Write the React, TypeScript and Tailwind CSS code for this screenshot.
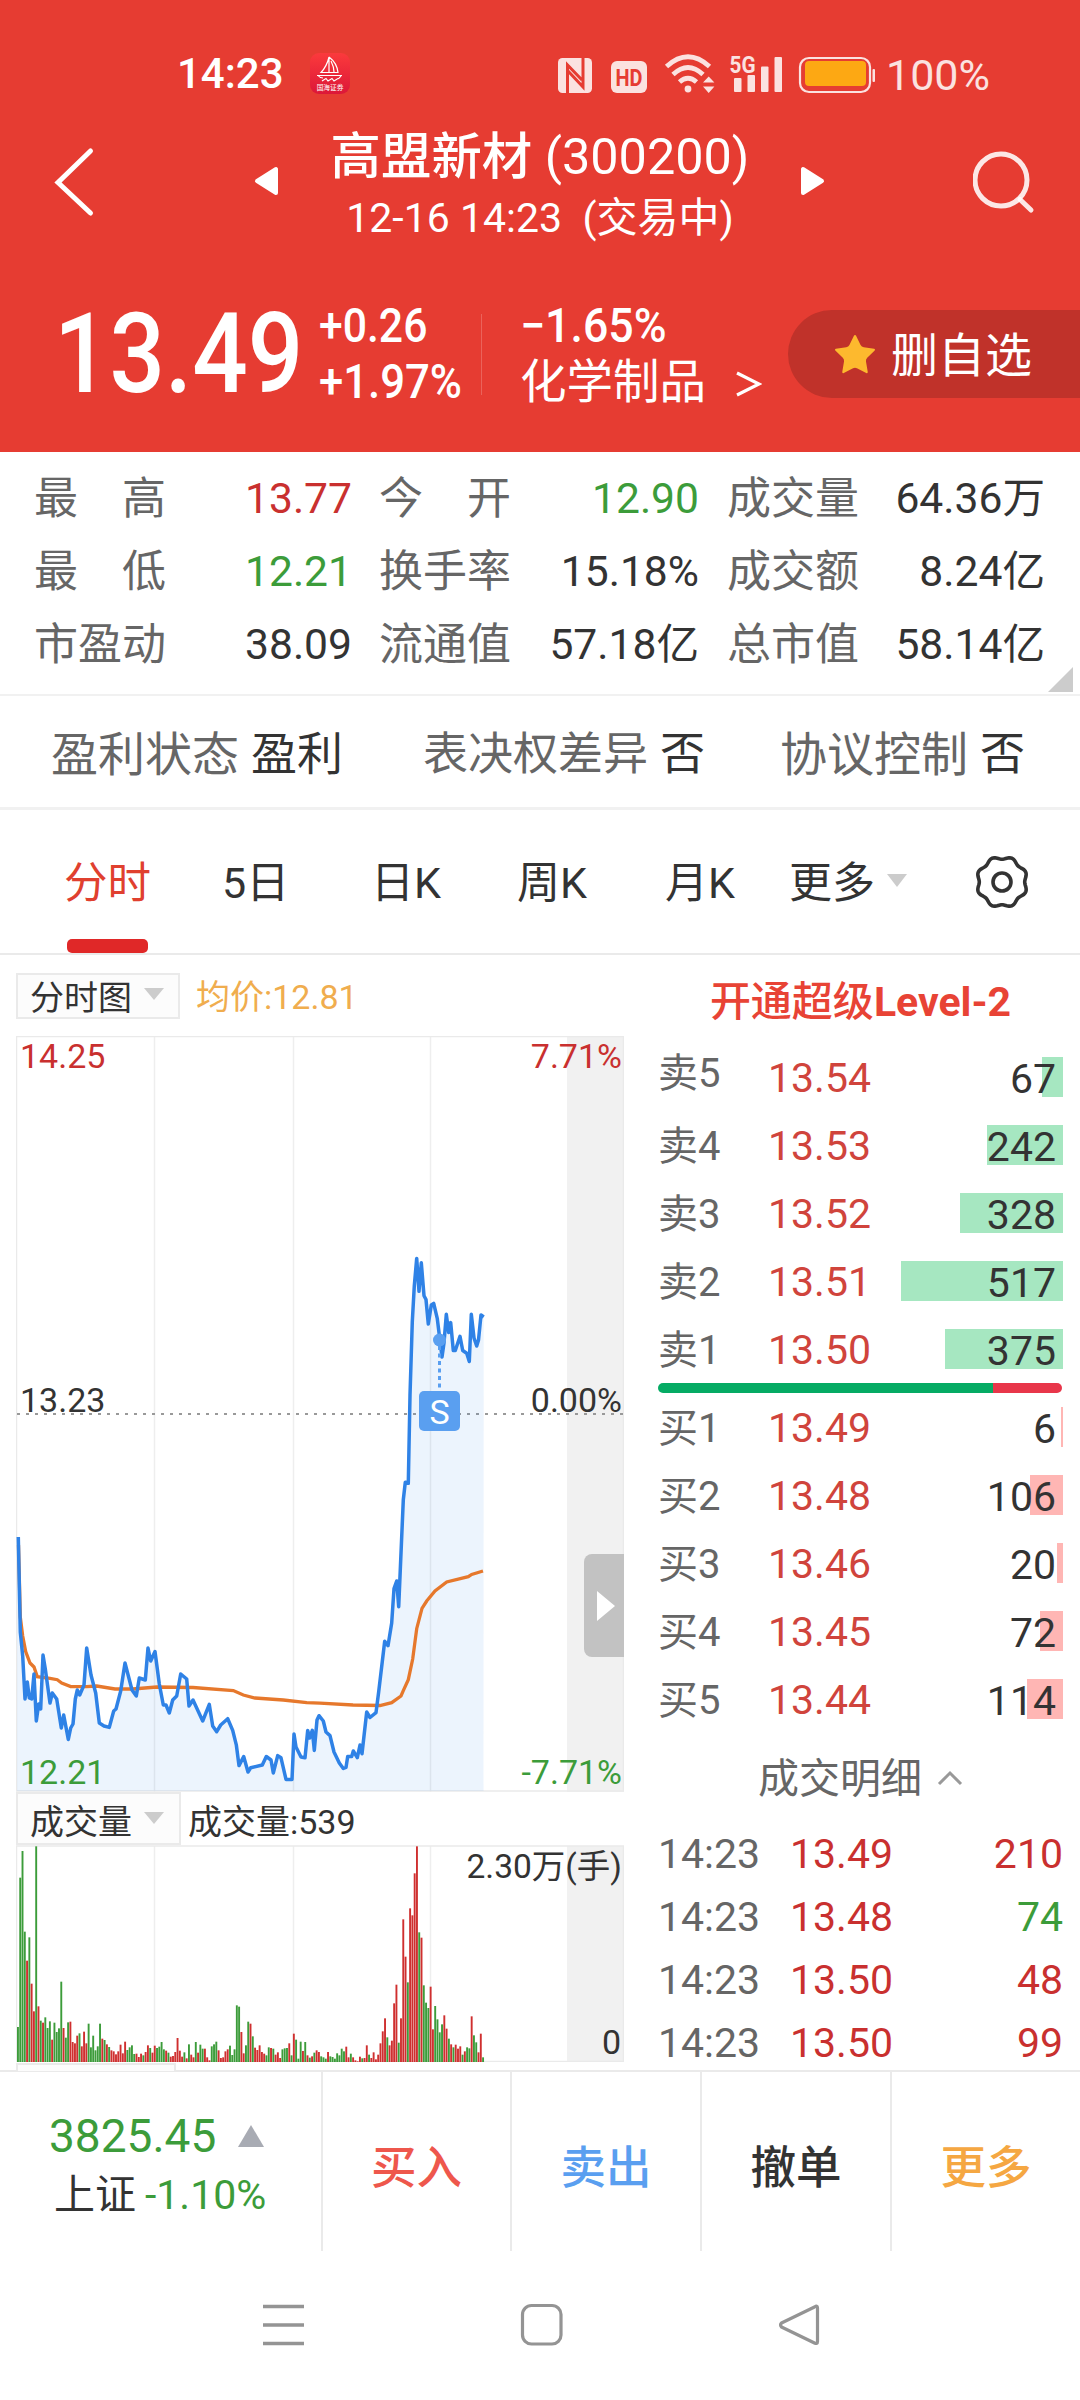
import { Star } from "lucide-react"
import clsx from "clsx"

const stats = [
  [
    { label: "最 高", value: "13.77", color: "text-[#c9302f]" },
    { label: "今 开", value: "12.90", color: "text-[#3c9c3a]" },
    { label: "成交量", value: "64.36万", color: "text-[#333]" },
  ],
  [
    { label: "最 低", value: "12.21", color: "text-[#3c9c3a]" },
    { label: "换手率", value: "15.18%", color: "text-[#333]" },
    { label: "成交额", value: "8.24亿", color: "text-[#333]" },
  ],
  [
    { label: "市盈动", value: "38.09", color: "text-[#333]" },
    { label: "流通值", value: "57.18亿", color: "text-[#333]" },
    { label: "总市值", value: "58.14亿", color: "text-[#333]" },
  ],
]

const sells = [
  { label: "卖5", price: "13.54", qty: 67, bar: 21 },
  { label: "卖4", price: "13.53", qty: 242, bar: 76 },
  { label: "卖3", price: "13.52", qty: 328, bar: 103 },
  { label: "卖2", price: "13.51", qty: 517, bar: 162 },
  { label: "卖1", price: "13.50", qty: 375, bar: 118 },
]

const buys = [
  { label: "买1", price: "13.49", qty: 6, bar: 2 },
  { label: "买2", price: "13.48", qty: 106, bar: 33 },
  { label: "买3", price: "13.46", qty: 20, bar: 6 },
  { label: "买4", price: "13.45", qty: 72, bar: 23 },
  { label: "买5", price: "13.44", qty: 114, bar: 36 },
]

const trades = [
  { time: "14:23", price: "13.49", qty: 210, up: true },
  { time: "14:23", price: "13.48", qty: 74, up: false },
  { time: "14:23", price: "13.50", qty: 48, up: true },
  { time: "14:23", price: "13.50", qty: 99, up: true },
]

// minute line and running average, in chart units
const priceLine =
  "18.3,1537 20.3,1632 22.7,1656 25,1699 27.3,1682 29.3,1698 31.7,1699 34,1674 36.3,1721 38.7,1704 40.7,1709 43,1655 45.3,1669 50,1703 52.3,1693 56.7,1699 61.3,1728 63.7,1715 68.3,1739.5 70.7,1728 73,1724 75.3,1699 77.3,1690 79.7,1695 84,1685 86.7,1648 91,1675 95.7,1693 99.3,1723 104,1726 109.3,1727.4 113.7,1711 116,1709 120.7,1691 125,1663 132,1690 136.3,1696 139.3,1678 145.3,1680 148,1648 150.7,1661 155,1651.5 159.3,1684 163.3,1705 166,1705 169.3,1713 172.7,1700 176.7,1696 180.7,1674 186.7,1679 189,1706 193,1700 202.7,1721 209.3,1704.4 212.7,1726 216.7,1731.7 220.7,1725 227.7,1718.7 232.7,1730.4 236.3,1744.8 239,1765.6 243.7,1756.5 248,1772 250.7,1767.7 262.3,1765 266.3,1756.5 271,1760 273.3,1773 277.7,1755.6 281,1757.8 286,1779.4 292,1779.4 294,1734 296,1747 301,1757 305,1757.8 307.7,1730.4 309.7,1738 312.3,1730.4 314.3,1750.4 317,1720 319,1715.7 323.3,1721 326,1732 330,1735.6 334,1752 339.3,1763 343.3,1768.5 346,1767.4 347.7,1756.5 351.7,1756.5 353.3,1751 357.3,1757.6 360,1745 362,1753.7 366.7,1712 370,1717.5 376,1712.6 378.7,1691.7 384.7,1641.3 388,1645.7 391.7,1623 394,1588.6 396.7,1581 398.7,1606.7 403.3,1499.8 405.3,1482.2 408.3,1483.3 410,1395.5 412.3,1321.5 414.3,1285.8 416.7,1258.4 419,1291.3 421.3,1262.8 424,1295.7 426,1299.5 428.3,1324 431.3,1305 433.7,1303.4 437.3,1318.7 442,1357 444,1343 446.3,1314.3 448.7,1332.5 450.7,1322.6 453.3,1350.5 455.3,1350.5 460,1336.3 462.7,1350.5 466.7,1353.3 469.3,1361.5 471.3,1314.3 474,1338 476.7,1346 478.5,1340 481,1315 483.7,1317"

const averageLine =
  "18.5,1545 20.3,1617 22.7,1636 25.7,1651.5 30,1663 34,1667 37.3,1676.7 50,1678.4 57.3,1679.7 61.7,1683 70.7,1686.6 86.7,1686.6 96.7,1686 115,1689 133,1689 156.7,1687 193,1687.5 233.3,1690.5 243.3,1695 255,1698 283.3,1700 306.7,1702.7 320,1703.2 353,1705 380,1705.5 391.7,1702.7 401,1696 403.3,1690.6 408.3,1679.7 412.7,1659 416.7,1628.7 422,1608.4 426.7,1601 435,1591 446.7,1582 468.3,1576.6 471.7,1574.4 483,1571"

// g = down minute, r = up minute, the number is the bar's height
const volume =
  "g105 g553 g633 g391 r304 g374 r235 r152 g647 r167 g124 r118 g134 g102 g122 r67 g118 g90 g101 g241 r102 g73 g119 r121 r60 r56 r79 g86 r47 r91 r56 g115 g44 g79 g35 g47 g115 r70 g66 r53 g45 r35 r32 r23 r32 r52 r26 r61 g36 g44 g50 g24 r25 r15 r25 g20 r30 r50 g42 r28 r49 g42 g46 g60 g38 r34 g28 r16 r18 r30 r72 r34 r16 g29 r11 g53 r22 r14 g60 r28 g52 g40 r40 r14 r5 g47 g53 g61 r35 r12 r14 r32 r38 g49 g21 g38 g170 g166 r90 r26 g50 g121 r115 g77 r43 r36 r50 r30 r25 g20 g44 r42 g40 r22 r29 r12 g38 g41 g42 r56 g20 r85 g67 g10 g61 r33 g60 r20 g13 r17 g28 r35 r30 g17 g14 g10 r30 g17 g15 g10 g26 g20 g40 g32 r46 r14 g25 r14 r5 r2 r16 g11 r12 r50 g22 r12 r29 r8 r22 r56 r92 r131 g74 r50 r64 r176 r232 g58 r131 r428 r316 g239 r461 r440 r566 r647 g389 r373 g230 g178 g162 r226 r98 g168 g128 g89 g113 r140 r100 g70 r53 g44 r52 r40 r47 g22 r32 g44 g41 r137 g80 g59 r29 r85 g14"
    .split(" ")
    .map((s) => ({ up: s[0] === "r", h: Number(s.slice(1)) / 3 }))

function gearPath() {
  const pts: string[] = []
  for (let i = 0; i < 160; i++) {
    const a = (i / 160) * Math.PI * 2
    const r = 24.2 - 1.5 * Math.cos(8 * a)
    pts.push(`${(28 + r * Math.cos(a)).toFixed(2)} ${(28 + r * Math.sin(a)).toFixed(2)}`)
  }
  return `M${pts.join("L")}Z`
}

function StatusBar() {
  return (
    <div className="flex h-[147px] items-center pl-[177px] text-white">
      <span className="w-[133px] text-[42px] font-medium">14:23</span>
      <svg className="h-[41px] w-[40px]" viewBox="0 0 40 41">
        <defs>
          <linearGradient id="app" x1="0" y1="0" x2="0" y2="1">
            <stop offset="0" stopColor="#fb3a3c" />
            <stop offset="1" stopColor="#dc1738" />
          </linearGradient>
        </defs>
        <rect width="40" height="41" rx="9" fill="url(#app)" />
        <path d="M19 4V19M19 4Q17 13 11 19.500H28Q27 10 19 4M21 8Q24 14 24 19M7 22.500H32M8 22.500Q10 25 13 25M31 23Q29 26 27 26M12 28L16 25.500L18 28L22 25.500L24 28L28 25.500" fill="none" stroke="#fff" strokeWidth="1.200" />
        <text x="20" y="37" textAnchor="middle" fontSize="6.700" fill="#fff">国海证券</text>
      </svg>
      <svg className="ml-[208px] h-[40px] w-[320px] overflow-visible opacity-85" viewBox="558 52 320 40">
        {/* nfc */}
        <rect x="558" y="56" width="34" height="35" rx="4.500" fill="#fff" />
        <path d="M567.500 91V63L582 78M583 56V85L568 69" fill="none" stroke="#e63c32" strokeWidth="3" />
        {/* hd voice */}
        <rect x="611" y="59" width="36" height="32" rx="6" fill="#fff" />
        <text x="629" y="83.500" textAnchor="middle" fontSize="24" fontWeight="700" fill="#e63c32" textLength="27" lengthAdjust="spacingAndGlyphs">HD</text>
        {/* wifi */}
        <g fill="none" stroke="#fff" strokeWidth="4.800">
          <path d="M666.500 64.500Q688 45 709.500 64.500" />
          <path d="M673 72.500Q688 58.500 703 72.500" />
          <path d="M679.500 80Q688 72.500 696.500 80" />
        </g>
        <circle cx="688" cy="87" r="3.400" fill="#fff" />
        <path d="M703 80.500L708.700 74.500L714.400 80.500ZM703 84.500H714.400L708.700 91Z" fill="#fff" />
        {/* signal */}
        <text x="729.500" y="70.500" fontSize="24" fontWeight="700" fill="#fff" textLength="26" lengthAdjust="spacingAndGlyphs">5G</text>
        <g fill="#fff">
          <rect x="734" y="76" width="7.500" height="14" rx="1" />
          <rect x="747.500" y="73" width="7.500" height="17" rx="1" />
          <rect x="761" y="64.500" width="7.500" height="25.500" rx="1" />
          <rect x="774.500" y="55" width="7.500" height="35" rx="1" />
        </g>
        <rect x="800" y="56" width="70" height="34" rx="9" fill="none" stroke="#fff" strokeWidth="2.200" />
        <rect x="872.500" y="67" width="2.500" height="13" rx="1" fill="#fff" />
      </svg>
      <div className="z-10 -ml-[73px] h-[25px] w-[61px] rounded-[4px] bg-[#fda813]" />
      <span className="mt-[3px] ml-[20px] text-[43px] opacity-85">100%</span>
    </div>
  )
}

function Header() {
  return (
    <header className="h-[452px] bg-[#e63c32] text-white">
      <StatusBar />
      <div className="-mt-[26px] flex h-[120px] items-center">
        <svg className="ml-[52px] h-[74px] w-[44px]" viewBox="0 0 44 74" fill="none" stroke="#fff" strokeWidth="5" strokeLinecap="round">
          <path d="M38.500 7L6 38.500L38.500 69" />
        </svg>
        <svg className="ml-[158px] h-[30px] w-[26px]" viewBox="0 0 26 30">
          <path d="M22 3V27L3 15Z" fill="#fff" stroke="#fff" strokeWidth="4" strokeLinejoin="round" />
        </svg>
        <div className="flex w-[520px] flex-col items-center pt-[9px]">
          <div className="text-[50.4px] whitespace-pre">
            <span className="font-medium">高盟新材</span> (300200)
          </div>
          <div className="mt-[16px] text-[41px] whitespace-pre">12-16 14:23  (交易中)</div>
        </div>
        <svg className="h-[30px] w-[26px]" viewBox="0 0 26 30">
          <path d="M3 3V27L22 15Z" fill="#fff" stroke="#fff" strokeWidth="4" strokeLinejoin="round" />
        </svg>
        <svg className="ml-[147px] h-[66px] w-[66px]" viewBox="0 0 66 66" fill="none" stroke="#fff" strokeOpacity="0.880" strokeWidth="5" strokeLinecap="round">
          <circle cx="28" cy="32" r="26" />
          <path d="M47 51.500L58 62" />
        </svg>
      </div>
      <div className="mt-[57px] flex h-[112px] items-center">
        <div className="w-[261px] pl-[54px]">
          <div className="origin-left scale-x-[0.88] text-[111px] font-medium">13.49</div>
        </div>
        <div className="w-[164px] pl-[58px]">
          <div className="flex flex-col gap-[8px] text-[48px] font-medium">
            <span className="origin-left scale-x-[0.89]">+0.26</span>
            <span className="origin-left scale-x-[0.91]">+1.97%</span>
          </div>
        </div>
        <div className="ml-[56px] h-[81px] w-px bg-white/20" />
        <div className="ml-[38px] flex w-[184px] flex-col gap-[9px]">
          <div className="origin-left scale-x-[0.93] text-[48px] font-medium">−1.65%</div>
          <div className="text-[46.5px] whitespace-nowrap">化学制品</div>
        </div>
        <svg className="mt-[60px] ml-[32px] h-[26px] w-[26px]" viewBox="0 0 26 26" fill="none" stroke="#fff" strokeWidth="3.200">
          <path d="M1 2L23 13L1 24" />
        </svg>
        <div className="ml-auto flex h-[88px] w-[292px] items-center rounded-l-full bg-[#c0322a] pl-[43px]">
          <Star className="mt-[2px] h-[48px] w-[48px] fill-[#fdb92e] text-[#fdb92e]" strokeWidth={0} />
          <span className="mt-[3px] ml-[12px] text-[47px]">删自选</span>
        </div>
      </div>
    </header>
  )
}

function Stats() {
  return (
    <section className="relative h-[244px] border-b-2 border-[#f1f1f1] pt-[10px]">
      {stats.map((row, i) => (
        <div key={i} className="flex h-[73px] items-center pr-[35px] pl-[34px]">
          {row.map((cell, j) => (
            <div key={j} className={clsx("flex items-center justify-between", j === 0 ? "w-[318px]" : j === 1 ? "ml-[27px] w-[320px]" : "ml-[28px] flex-1")}>
              <span className="flex w-[132px] justify-between text-[44px] text-[#666]">
                {cell.label.split(" ").map((t) => (
                  <span key={t}>{t}</span>
                ))}
              </span>
              <span className={clsx("text-[42.6px]", cell.color)}>{cell.value}</span>
            </div>
          ))}
        </div>
      ))}
      <svg className="absolute right-[7px] bottom-[2px] h-[25px] w-[25px]" viewBox="0 0 25 25">
        <path d="M25 0V25H0Z" fill="#ccc" />
      </svg>
    </section>
  )
}

function Flags() {
  return (
    <section className="flex h-[114px] items-center border-b-[3px] border-[#f1f1f1] pt-[5px] pl-[51px] whitespace-nowrap text-[#666]">
      <div className="flex w-[372px] items-center gap-[12px] text-[47px]">
        盈利状态<span className="text-[46px] text-[#333]">盈利</span>
      </div>
      <div className="flex w-[357px] gap-[12px] text-[45px]">
        表决权差异<span className="text-[#333]">否</span>
      </div>
      <div className="flex items-center gap-[12px] text-[47px]">
        协议控制<span className="text-[45px] text-[#333]">否</span>
      </div>
    </section>
  )
}

function Tabs() {
  return (
    <nav className="flex h-[145px] items-center border-b-2 border-[#eaeaea] text-[43px] text-[#333]">
      <div className="ml-[64px] flex h-full w-[158px] flex-col justify-end text-[#e0402f]">
        <span className="mb-[34px] text-[43.5px]">分时</span>
        <div className="ml-[3px] h-[14px] w-[81px] rounded-[5px] bg-[#e02828]" />
      </div>
      <span className="mt-[3px] w-[149px]">5日</span>
      <span className="mt-[3px] w-[146px]">日K</span>
      <span className="mt-[3px] w-[148px]">周K</span>
      <span className="mt-[3px] w-[124px]">月K</span>
      <span className="mt-[3px]">更多</span>
      <svg className="mb-[2px] ml-[12px] h-[13px] w-[20px]" viewBox="0 0 20 13">
        <path d="M0 0H20L10 13Z" fill="#ccc" />
      </svg>
      <svg className="ml-[67px] h-[56px] w-[56px]" viewBox="0 0 56 56" fill="none" stroke="#333" strokeWidth="3.600">
        <path d={gearPath()} />
        <circle cx="28" cy="28" r="9" />
      </svg>
    </nav>
  )
}

function Picker({ label }: { label: string }) {
  return (
    <>
      <span className="mt-[3px]">{label}</span>
      <svg className="mb-[4px] ml-[12px] h-[12px] w-[20px]" viewBox="0 0 20 12">
        <path d="M0 0H20L10 12Z" fill="#ccc" />
      </svg>
    </>
  )
}

function Charts() {
  return (
    <div className="w-[640px] shrink-0 pl-[16px] text-[34px] text-[#333]">
      <div className="flex h-[81px] items-center pt-[1px]">
        <div className="flex h-[46px] w-[164px] items-center border-2 border-[#eaeaea] bg-[#fcfcfc] pl-[12px]">
          <Picker label="分时图" />
        </div>
        <span className="mt-[2px] ml-[16px] text-[#f0ad4e]">均价:12.81</span>
      </div>

      <div className="relative h-[756px] w-[608px]">
        <svg className="block h-[756px] w-[608px]" viewBox="16 1036 608 756">
          <rect x="567" y="1036" width="57" height="756" fill="#f1f1f1" />
          <path d="M154.500 1036V1792M293.500 1036V1792M430.500 1036V1792" stroke="#eee" strokeWidth="1.500" />
          <rect x="16.500" y="1036.500" width="607" height="754.500" fill="none" stroke="#eaeaea" strokeWidth="1.500" />
          <path d="M17 1414H624" stroke="#999" strokeWidth="2" strokeDasharray="3 6" />
          <polygon points={`17,1791 17,1537 ${priceLine} 483.500,1791`} fill="#2f85ec" fillOpacity="0.090" />
          <polyline points={averageLine} fill="none" stroke="#e6782c" strokeWidth="3.300" />
          <polyline points={priceLine} fill="none" stroke="#2f82e6" strokeWidth="3.500" strokeLinejoin="round" />
          <path d="M439.500 1346V1391" stroke="#5a9ff0" strokeWidth="3" strokeDasharray="4 3.500" />
          <circle cx="439.500" cy="1340" r="6.500" fill="#5a9ff0" />
          <rect x="419" y="1391" width="41" height="40" rx="5" fill="#5a9ff0" />
          <text x="439.700" y="1423.500" textAnchor="middle" fontSize="34" fill="#fff">S</text>
        </svg>
        <div className="absolute top-[3px] right-[2px] left-[4px] flex justify-between text-[#c9302f]">
          <span>14.25</span>
          <span>7.71%</span>
        </div>
        <div className="absolute top-[347px] right-[2px] left-[4px] flex justify-between">
          <span>13.23</span>
          <span>0.00%</span>
        </div>
        <div className="absolute top-[719px] right-[2px] left-[4px] flex justify-between text-[#3c9c3a]">
          <span>12.21</span>
          <span>-7.71%</span>
        </div>
        <div className="absolute top-[518px] right-0 flex h-[103px] w-[40px] items-center rounded-l-[8px] bg-[#c2c2c2] pl-[13px]">
          <svg className="h-[30px] w-[18px]" viewBox="0 0 18 30">
            <path d="M0 0L18 15L0 30Z" fill="#fff" />
          </svg>
        </div>
      </div>

      <div className="flex h-[53px] items-center">
        <div className="flex h-[53px] w-[165px] items-center border-2 border-[#eaeaea] bg-[#fcfcfc] pt-[3px] pl-[12px]">
          <Picker label="成交量" />
        </div>
        <span className="mt-[7px] ml-[7px]">成交量:539</span>
      </div>

      <div className="relative h-[217px] w-[608px]">
        <svg className="block h-[217px] w-[608px]" viewBox="16 1845 608 217">
          <rect x="567" y="1846" width="57" height="216" fill="#f1f1f1" />
          <path d="M154.500 1846V2062M293.500 1846V2062M430.500 1846V2062" stroke="#eee" strokeWidth="1.500" />
          <rect x="16.500" y="1846" width="607" height="215.500" fill="none" stroke="#eaeaea" strokeWidth="1.500" />
          {volume.map((v, i) => (
            <rect key={i} x={17 + i * 2.28} y={2062 - v.h} width="1.900" height={v.h} fill={v.up ? "#cf2f2f" : "#3c9c3a"} />
          ))}
        </svg>
        <span className="absolute top-[5px] right-[2px] text-[33.5px]">2.30万(手)</span>
        <span className="absolute right-[3px] bottom-[3px]">0</span>
      </div>
      <div className="mt-px h-[8px] w-[160px] border-2 border-b-0 border-[#eaeaea] bg-[#fcfcfc]" />
    </div>
  )
}

function BookRow({ row, sell }: { row: (typeof sells)[number]; sell: boolean }) {
  return (
    <div className="flex h-[68px] items-center text-[41px]">
      <span className={clsx("w-[110px] text-[40px] text-[#666]", row.label === "卖5" ? "-mt-[7px]" : "mt-[4px]")}>{row.label}</span>
      <span className="mt-[3px] text-[#d0443c]">{row.price}</span>
      <div className="relative ml-auto flex h-[40px] w-[180px] items-center justify-end pr-[7px]">
        <div className={clsx("absolute right-0 h-full", sell ? "bg-[#a6e7c1]" : "bg-[#ffb6b4]")} style={{ width: row.bar }} />
        <span className="relative mt-[4px] text-[#333]">{row.qty}</span>
      </div>
    </div>
  )
}

function OrderBook() {
  return (
    <div className="h-[1115px] flex-1 pr-[17px] pl-[18px]">
      <div className="flex h-[88px] items-center justify-center pt-[6px] text-[41px] font-bold text-[#e84335]">
        <span className="font-medium">开通超级</span>Level-2
      </div>
      {sells.map((r) => (
        <BookRow key={r.label} row={r} sell />
      ))}
      <div className="flex h-[10px] w-[404px] overflow-hidden rounded-full">
        <div className="w-[335px] bg-[#05ab64]" />
        <div className="flex-1 bg-[#e8364a]" />
      </div>
      {buys.map((r) => (
        <BookRow key={r.label} row={r} sell={false} />
      ))}
      <div className="flex h-[89px] items-center justify-center pt-[4px] text-[41px] text-[#666]">
        成交明细
        <svg className="mb-[4px] ml-[15px] h-[16px] w-[26px]" viewBox="0 0 26 16" fill="none" stroke="#999" strokeWidth="3">
          <path d="M2 14L13 3L24 14" />
        </svg>
      </div>
      {trades.map((t, i) => (
        <div key={i} className="flex h-[63px] items-center pt-[2px] text-[41px]">
          <span className="w-[132px] text-[#666]">{t.time}</span>
          <span className="text-[#c9302f]">{t.price}</span>
          <span className={clsx("ml-auto", t.up ? "text-[#c9302f]" : "text-[#3c9c3a]")}>{t.qty}</span>
        </div>
      ))}
    </div>
  )
}

function ActionBar() {
  return (
    <footer className="flex h-[181px] border-t-2 border-[#eaeaea] text-[45.5px] font-medium">
      <div className="w-[321px] pt-[41px] pl-[49px] font-normal">
        <div className="flex items-center text-[46px] text-[#3c9c3a]">
          3825.45
          <svg className="ml-[22px] h-[22px] w-[26px]" viewBox="0 0 26 22">
            <path d="M13 0L26 22H0Z" fill="#a8abb3" />
          </svg>
        </div>
        <div className="mt-[16px] flex items-center gap-[9px] pl-[5px] text-[41px] text-[#333]">
          上证<span className="text-[#3c9c3a]">-1.10%</span>
        </div>
      </div>
      <div className="flex w-[189px] items-center justify-center border-l-2 border-[#eaeaea] pt-[14px] text-[#ee574c]">买入</div>
      <div className="flex w-[190px] items-center justify-center border-l-2 border-[#eaeaea] pt-[14px] text-[#5a9ff0]">卖出</div>
      <div className="flex w-[190px] items-center justify-center border-l-2 border-[#eaeaea] pt-[14px] text-[#333]">撤单</div>
      <div className="flex flex-1 items-center justify-center border-l-2 border-[#eaeaea] pt-[14px] text-[#f5a742]">更多</div>
    </footer>
  )
}

function SystemNav() {
  return (
    <div className="flex h-[148px] items-center pl-[262px]">
      <svg className="h-[44px] w-[42px]" viewBox="0 0 42 44" stroke="#949494" strokeWidth="3.500">
        <path d="M1 3.500H42M1 22H42M1 40.500H42" />
      </svg>
      <svg className="ml-[216px] h-[44px] w-[44px]" viewBox="0 0 44 44" fill="none" stroke="#949494" strokeWidth="3.200">
        <rect x="2.500" y="2.500" width="38.500" height="38.500" rx="9" />
      </svg>
      <svg className="ml-[214px] h-[44px] w-[44px]" viewBox="0 0 44 44" fill="none" stroke="#949494" strokeWidth="3.200" strokeLinejoin="round">
        <path d="M36.500 4Q39.500 2 39.500 5V38.500Q39.500 41.500 36.500 40L3.500 24Q1.500 22 3.500 20Z" />
      </svg>
    </div>
  )
}

export default function App() {
  return (
    <div className="h-[2400px] w-[1080px] overflow-hidden bg-white font-[Roboto,'Noto_Sans_CJK_SC',sans-serif] leading-none">
      <Header />
      <Stats />
      <Flags />
      <Tabs />
      <main className="flex h-[1115px]">
        <Charts />
        <OrderBook />
      </main>
      <ActionBar />
      <SystemNav />
    </div>
  )
}
